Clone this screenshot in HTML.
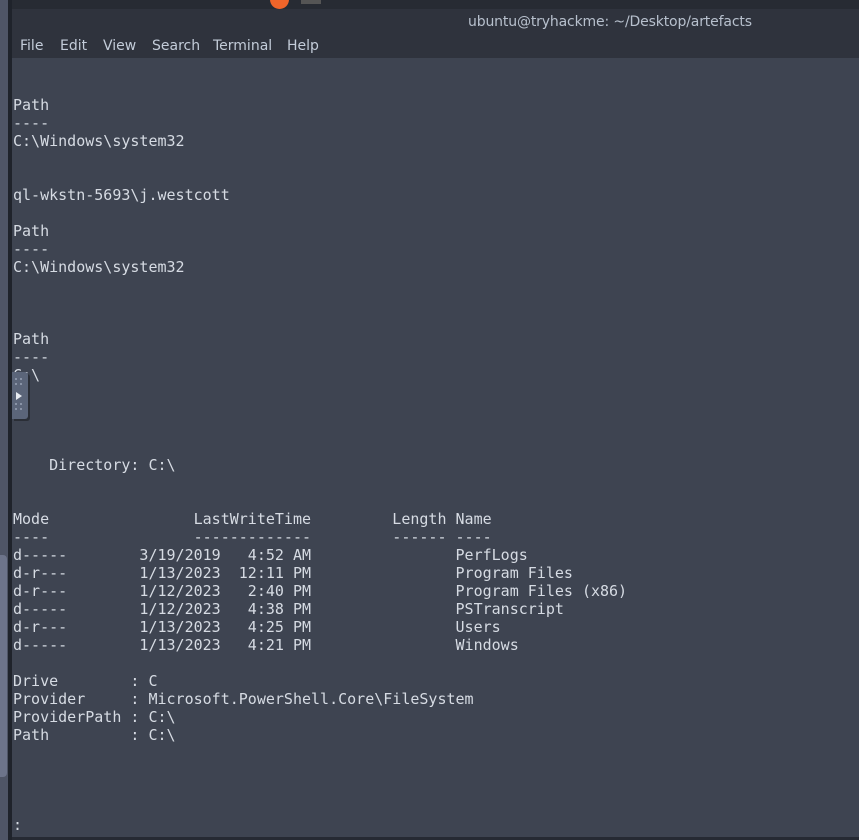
<!DOCTYPE html>
<html><head><meta charset="utf-8"><style>
html,body{margin:0;padding:0;width:859px;height:840px;overflow:hidden;background:#3e4451;position:relative;font-family:"DejaVu Sans Mono","Liberation Mono",monospace}
#lstrip{position:absolute;left:0;top:0;width:8px;height:840px;background:#4f5566}
#thumb{position:absolute;left:0;top:555px;width:7px;height:222px;background:#6d748a;border-radius:0 4px 4px 0}
#ldark{position:absolute;left:8px;top:0;width:4px;height:840px;background:#1f232b}
#top0{position:absolute;left:12px;top:0;width:847px;height:9px;background:#272b33}
#bar{position:absolute;left:12px;top:9px;width:847px;height:49px;background:#2f333d}
#title{position:absolute;left:468px;top:14px;font:14px "DejaVu Sans","Liberation Sans",sans-serif;color:#b7c0cd;letter-spacing:-0.15px}
.m{position:absolute;top:38px;font:14px "DejaVu Sans","Liberation Sans",sans-serif;color:#c3ccd9}
pre{position:absolute;left:13px;top:96px;margin:0;font-size:15px;line-height:18px;color:#d6dbe3;font-family:"DejaVu Sans Mono","Liberation Mono",monospace}
#handle{position:absolute;left:12px;top:372px;width:16px;height:47px;background:#5b6579;border-radius:0 3px 3px 0;box-shadow:2px 2px 0 #2a2e36}
#bot{position:absolute;left:12px;top:837px;width:847px;height:3px;background:#262a33}
</style></head><body>
<div id="lstrip"><div id="thumb"></div></div>
<div id="ldark"></div>
<div id="top0"><div style="position:absolute;left:258px;top:-10px;width:19px;height:19px;border-radius:50%;background:#f0652a"></div><div style="position:absolute;left:289px;top:0;width:20px;height:4px;background:#555"></div></div>
<div id="bar"></div>
<div id="title">ubuntu@tryhackme: ~/Desktop/artefacts</div>
<div class="m" style="left:20px">File</div><div class="m" style="left:60px">Edit</div><div class="m" style="left:103px">View</div><div class="m" style="left:152px">Search</div><div class="m" style="left:213px">Terminal</div><div class="m" style="left:287px">Help</div>
<pre>Path
----
C:\Windows\system32


ql-wkstn-5693\j.westcott

Path
----
C:\Windows\system32



Path
----
C:\




    Directory: C:\


Mode                LastWriteTime         Length Name
----                -------------         ------ ----
d-----        3/19/2019   4:52 AM                PerfLogs
d-r---        1/13/2023  12:11 PM                Program Files
d-r---        1/12/2023   2:40 PM                Program Files (x86)
d-----        1/12/2023   4:38 PM                PSTranscript
d-r---        1/13/2023   4:25 PM                Users
d-----        1/13/2023   4:21 PM                Windows

Drive        : C
Provider     : Microsoft.PowerShell.Core\FileSystem
ProviderPath : C:\
Path         : C:\




:</pre>
<div id="handle"><svg width="16" height="47" style="position:absolute;left:0;top:0"><g fill="#8993a6"><rect x="3" y="6" width="2" height="2"/><rect x="8" y="6" width="2" height="2"/><rect x="3" y="11" width="2" height="2"/><rect x="8" y="11" width="2" height="2"/><rect x="3" y="31" width="2" height="2"/><rect x="8" y="31" width="2" height="2"/><rect x="3" y="36" width="2" height="2"/><rect x="8" y="36" width="2" height="2"/></g><path d="M4 20 L10 24 L4 28Z" fill="#e8ecf2"/></svg></div>
<div id="bot"></div>
</body></html>
